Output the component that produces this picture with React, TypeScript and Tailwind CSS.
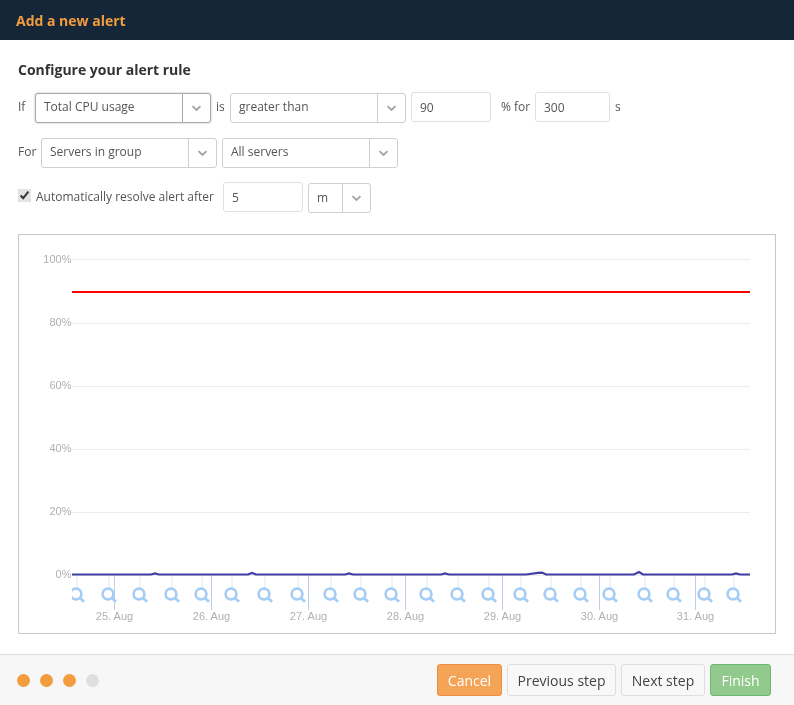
const flags = [77, 109, 140, 172, 202, 232, 265, 298, 331, 361, 392, 427, 458, 489, 521, 551, 581, 610, 645, 674, 705, 734];
const ticks = [114.5, 211.5, 308.5, 405.5, 502.5, 599.5, 695.5];
const tickLabels = ["25. Aug", "26. Aug", "27. Aug", "28. Aug", "29. Aug", "30. Aug", "31. Aug"];
const grid = [
  { y: 259.5, b: 263, l: "100%" },
  { y: 323.5, b: 326, l: "80%" },
  { y: 386.5, b: 389, l: "60%" },
  { y: 449.5, b: 452, l: "40%" },
  { y: 512.5, b: 515, l: "20%" },
  { y: 575.5, b: 578, l: "0%" },
];

function Chevron() {
  return (
    <svg width="11" height="7" viewBox="0 0 11 7" fill="none" stroke="#a3a3a3" strokeWidth="1.8">
      <path d="M1.5 1.2 L5.5 5 L9.5 1.2" />
    </svg>
  );
}

function Select({ label, w, arrow = 28, focus = false, textLift = true }: { label: string; w: string; arrow?: number; focus?: boolean; textLift?: boolean }) {
  return (
    <div
      className={`flex h-[30px] shrink-0 items-stretch rounded-[3px] border bg-white ${w} ${
        focus ? "border-[#a9a9a9] shadow-[0_0_2px_rgba(0,0,0,0.3)]" : "border-[#cfcfcf]"
      }`}
    >
      <div className={`flex flex-1 items-center pl-2 text-[12px] text-[#555] ${textLift ? "pb-[2px]" : ""}`}>{label}</div>
      <div
        className={`flex items-center justify-center border-l ${focus ? "border-[#a9a9a9]" : "border-[#cfcfcf]"}`}
        style={{ width: arrow }}
      >
        <Chevron />
      </div>
    </div>
  );
}

function NumInput({ value, w, lift = false }: { value: string; w: string; lift?: boolean }) {
  return (
    <div
      className={`flex h-[30px] shrink-0 items-center rounded-[3px] border border-[#e0e0e0] bg-white pl-2 pt-[2px] text-[12px] text-[#555] ${w} ${
        lift ? "-mt-[2px]" : ""
      }`}
    >
      {value}
    </div>
  );
}

function Chart() {
  return (
    <div className="mx-[18px] mt-[22px] h-[400px] border border-[#c8c8c8] bg-white">
      <svg width="756" height="398" viewBox="19 235 756 398" className="block" fontFamily="'Liberation Sans', sans-serif">
        <defs>
          <clipPath id="plot">
            <rect x="72" y="235" width="700" height="398" />
          </clipPath>
        </defs>
        {grid.map((g) => (
          <g key={g.l}>
            <line x1="72" x2="750" y1={g.y} y2={g.y} stroke="#ededed" />
            <text x="71.5" y={g.b} textAnchor="end" fontSize="11" fill="#b0b0b0">
              {g.l}
            </text>
          </g>
        ))}
        {ticks.map((t, i) => (
          <g key={t}>
            <line x1={t} x2={t} y1="575" y2="610" stroke="#bccfe4" />
            <text x={t} y="620" textAnchor="middle" fontSize="11" fill="#b0b0b0">
              {tickLabels[i]}
            </text>
          </g>
        ))}
        <g clipPath="url(#plot)">
          {flags.map((f) => (
            <g key={f}>
              <line x1={f} x2={f} y1="576" y2="588" stroke="#dde8f5" />
              <circle cx={f - 1} cy="594" r="5.4" fill="none" stroke="#a6cdf5" strokeWidth="2.7" />
              <line x1={f + 3} y1="598" x2={f + 7} y2="601.8" stroke="#a6cdf5" strokeWidth="2.8" />
            </g>
          ))}
        </g>
        <line x1="72" x2="750" y1="292" y2="292" stroke="#ff0000" strokeWidth="2" />
        <path
          d="M72 574.5 H151 L155 573.5 L159 574.5 H248 L252 573 L256 574.5 H345 L349 573.5 L353 574.5 H441 L445 573.5 L449 574.5 H526 L538 572.8 L542 572.6 L546 574.5 H634 L639 572 L643 574.5 H732 L736 573.5 L740 574.5 H750"
          fill="none"
          stroke="#3f3fa5"
          strokeWidth="2.2"
        />
      </svg>
    </div>
  );
}

function Dot({ on }: { on: boolean }) {
  return <div className={`h-[13px] w-[13px] rounded-full ${on ? "bg-[#f39c3d]" : "bg-[#dfdfdf]"}`} />;
}

export default function App() {
  return (
    <div className="flex h-[705px] w-[794px] flex-col bg-white text-[#555] will-change-transform" style={{ fontFamily: "'Open Sans', sans-serif" }}>
      <header className="flex h-10 items-center bg-[#152638] pl-[16px] text-[14px] font-bold text-[#f39c3d]">Add a new alert</header>

      <h2 className="ml-[18px] mt-[20px] text-[14px] font-bold leading-5 text-[#333]">Configure your alert rule</h2>

      <div className="ml-[18px] mt-[13px] flex h-[30px] items-center text-[12px]">
        <span className="w-[17px] pb-[2px]">If</span>
        <Select label="Total CPU usage" w="w-[176px]" focus />
        <span className="w-[19px] pb-[2px] pl-[5px]">is</span>
        <Select label="greater than" w="w-[176px]" />
        <div className="ml-[5px]">
          <NumInput value="90" w="w-[80px]" lift />
        </div>
        <span className="ml-[10px] w-[34px] pb-[2px]">% for</span>
        <NumInput value="300" w="w-[75px]" lift />
        <span className="ml-[5px] pb-[2px]">s</span>
      </div>

      <div className="ml-[18px] mt-[15px] flex h-[30px] items-center text-[12px]">
        <span className="w-[23px] pb-[2px]">For</span>
        <Select label="Servers in group" w="w-[176px]" />
        <div className="ml-[5px]">
          <Select label="All servers" w="w-[176px]" />
        </div>
      </div>

      <div className="ml-[18px] mt-[14px] flex h-[30px] items-center text-[12px]">
        <input type="checkbox" checked readOnly className="relative -top-[2px] m-0 h-[13px] w-[13px] accent-[#e4e4e4]" />
        <span className="ml-[5px] w-[187px]">Automatically resolve alert after</span>
        <NumInput value="5" w="w-[80px]" />
        <div className="ml-[5px] mt-[2px]">
          <Select label="m" w="w-[63px]" textLift={false} />
        </div>
      </div>

      <Chart />

      <footer className="mt-[20px] flex h-[51px] items-center justify-between border-t border-[#dedede] bg-[#f7f7f7] pl-[17px] pr-[23px]">
        <div className="flex gap-[10px]">
          <Dot on />
          <Dot on />
          <Dot on />
          <Dot on={false} />
        </div>
        <div className="flex gap-[5px] text-[14px]">
          <button className="h-[32px] w-[65px] rounded-[3px] border border-[#ec8f45] bg-[#f5a356] text-white">Cancel</button>
          <button className="h-[32px] w-[109px] rounded-[3px] border border-[#dedede] bg-[#f8f8f8] text-[#444]">Previous step</button>
          <button className="h-[32px] w-[84px] rounded-[3px] border border-[#dedede] bg-[#f8f8f8] text-[#444]">Next step</button>
          <button className="h-[32px] w-[61px] rounded-[3px] border border-[#6fb96f] bg-[#92ca8d] text-white">Finish</button>
        </div>
      </footer>
    </div>
  );
}
